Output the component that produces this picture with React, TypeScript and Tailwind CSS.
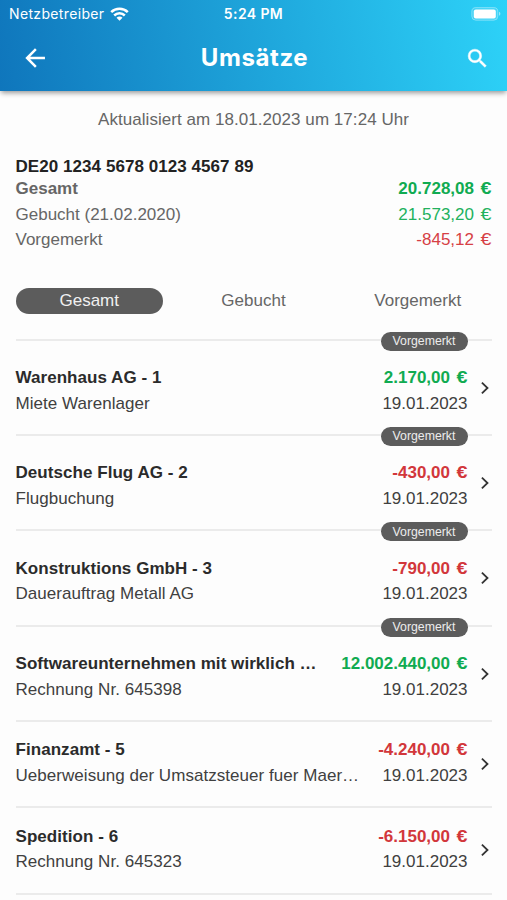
import React from "react";

type Booking = {
  name: string;
  purpose: string;
  amount: string;
  credit?: boolean;
  pending?: boolean;
};

const bookings: Booking[] = [
  { name: "Warenhaus AG - 1", purpose: "Miete Warenlager", amount: "2.170,00", credit: true, pending: true },
  { name: "Deutsche Flug AG - 2", purpose: "Flugbuchung", amount: "-430,00", pending: true },
  { name: "Konstruktions GmbH - 3", purpose: "Dauerauftrag Metall AG", amount: "-790,00", pending: true },
  { name: "Softwareunternehmen mit wirklich …", purpose: "Rechnung Nr. 645398", amount: "12.002.440,00", credit: true, pending: true },
  { name: "Finanzamt - 5", purpose: "Ueberweisung der Umsatzsteuer fuer Maer…", amount: "-4.240,00" },
  { name: "Spedition - 6", purpose: "Rechnung Nr. 645323", amount: "-6.150,00" },
];

function Amount({ value, className }: { value: string; className: string }) {
  return (
    <span className={className}>
      <span className="[word-spacing:3.3px]">{value} </span>
      <span className="inline-block origin-right scale-x-[1.16]">€</span>
    </span>
  );
}

function StatusBar() {
  return (
    <div className="grid h-[27px] grid-cols-3 items-center pr-[6px] pl-[9px] text-[14px] leading-none">
      <div className="flex items-center gap-[6px]">
        <span className="tracking-[0.35px]">Netzbetreiber</span>
        <svg width="19" height="14" viewBox="0 0 19 14" fill="none" stroke="currentColor" strokeWidth="2.5">
          <path d="M1.2 5.1a11.8 11.8 0 0 1 16.6 0" />
          <path d="M4.2 8.5a7.5 7.5 0 0 1 10.6 0" />
          <path d="M9.5 13.8 6.5 10.8a4.2 4.2 0 0 1 6 0z" fill="currentColor" stroke="none" />
        </svg>
      </div>
      <span className="-ml-[3px] text-center font-semibold tracking-[0.4px]">5:24 PM</span>
      <svg className="justify-self-end" width="30" height="14" viewBox="0 0 30 14">
        <rect x="0.8" y="0.6" width="26" height="12.6" rx="4" fill="white" fillOpacity="0.12" stroke="white" strokeOpacity="0.35" />
        <rect x="2.8" y="2.6" width="22" height="8.8" rx="2" fill="white" />
        <path d="M28 4.8v4q1.4-.6 1.4-2t-1.4-2" fill="white" fillOpacity="0.5" />
      </svg>
    </div>
  );
}

function Header() {
  return (
    <header className="relative h-[91px] bg-[linear-gradient(80deg,#0f76bc,#2dd2f8)] font-[Inter,sans-serif] text-white shadow-[0_3px_5px_-1px_rgba(0,0,0,0.4)]">
      <StatusBar />
      <div className="flex h-[62px] items-center justify-between pr-[17px] pl-[22px]">
        <svg width="26" height="26" viewBox="0 0 24 24" fill="none" stroke="currentColor" strokeWidth="2.3">
          <path d="M21.2 12H5M12.8 3.9 4.7 12l8.1 8.1" />
        </svg>
        <h1 className="-ml-[4px] text-[24px] leading-none font-bold tracking-[0.6px]">Umsätze</h1>
        <svg width="25" height="25" viewBox="0 0 24 24" fill="currentColor" stroke="currentColor" strokeWidth="0.4">
          <path d="M15.5 14h-.79l-.28-.27A6.471 6.471 0 0 0 16 9.5 6.5 6.5 0 1 0 9.5 16c1.61 0 3.09-.59 4.23-1.57l.27.28v.79l5 4.99L20.49 19l-4.99-5zm-6 0C7.01 14 5 11.99 5 9.5S7.01 5 9.5 5 14 7.01 14 9.5 11.99 14 9.5 14z" />
        </svg>
      </div>
    </header>
  );
}

function Row({ booking }: { booking: Booking }) {
  return (
    <li
      className={
        booking.pending
          ? "relative flex h-[95.3px] items-start border-t-2 border-[#ebebeb] pt-[24.4px]"
          : "relative flex h-[86.3px] items-start border-t-2 border-[#ebebeb] pt-[15.4px]"
      }
    >
      {booking.pending && (
        <span className="absolute -top-[9px] right-[24px] flex h-[19px] w-[87px] items-center justify-center rounded-full bg-[#5c5c5c] text-[12.3px] text-[#ececec]">
          Vorgemerkt
        </span>
      )}
      <div className="min-w-0 flex-1 leading-[25.6px] whitespace-nowrap">
        <div className="flex justify-between font-bold">
          <span className="tracking-[0.05px] text-[#2b2b2b]">{booking.name}</span>
          <Amount value={booking.amount} className={booking.credit ? "text-[#10ab51]" : "text-[#d2373b]"} />
        </div>
        <div className="flex justify-between text-[#404040]">
          <span className="tracking-[0.04px]">{booking.purpose}</span>
          <span>19.01.2023</span>
        </div>
      </div>
      <svg
        className={booking.pending ? "mt-[15.6px] mr-px ml-[11px] shrink-0" : "mt-[19.4px] mr-px ml-[11px] shrink-0"}
        width="12"
        height="14"
        viewBox="0 0 12 14"
        fill="none"
        stroke="#333"
        strokeWidth="1.8"
      >
        <path d="M2.9 1.6 8.5 7l-5.6 5.4" />
      </svg>
    </li>
  );
}

export default function App() {
  return (
    <div className="h-[900px] w-[507px] overflow-hidden bg-[#fdfdfd] font-['Liberation_Sans',Arial,sans-serif] text-[17px]">
      <Header />
      <main className="px-[15.5px] text-[#666]">
        <p className="pt-[16px] text-center leading-[25px] tracking-[0.05px]">Aktualisiert am 18.01.2023 um 17:24 Uhr</p>
        <section className="pt-[24px]">
          <h2 className="leading-[21px] font-bold tracking-[0.06px] text-[#222]">DE20 1234 5678 0123 4567 89</h2>
          <div className="-mt-px flex justify-between leading-[25.6px] font-bold">
            <span>Gesamt</span>
            <Amount value="20.728,08" className="text-[#10ab51]" />
          </div>
          <div className="flex justify-between leading-[25.6px]">
            <span>Gebucht (21.02.2020)</span>
            <Amount value="21.573,20" className="text-[#22b15d]" />
          </div>
          <div className="flex justify-between leading-[25.6px]">
            <span>Vorgemerkt</span>
            <Amount value="-845,12" className="text-[#d64045]" />
          </div>
        </section>
        <nav className="mt-[35px] grid h-[26px] grid-cols-[147.5px_147.5px_147.5px] justify-between text-center leading-[26px]">
          <span className="rounded-full bg-[#5c5c5c] text-[#f0f0f0]">Gesamt</span>
          <span>Gebucht</span>
          <span>Vorgemerkt</span>
        </nav>
        <ul className="mt-[25px] border-b-2 border-[#ebebeb]">
          {bookings.map((b) => (
            <Row key={b.name} booking={b} />
          ))}
        </ul>
      </main>
    </div>
  );
}
